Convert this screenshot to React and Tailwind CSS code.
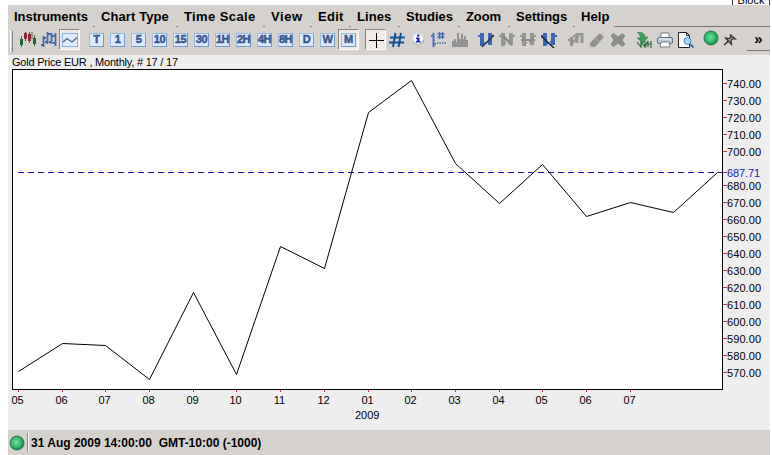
const MENUS = [
  { label: 'Instruments', width: 'w-[87px]', tracking: 'tracking-[-0.05px]' },
  { label: 'Chart Type', width: 'w-[83px]', tracking: 'tracking-[0.1px]' },
  { label: 'Time Scale', width: 'w-[87px]', tracking: 'tracking-[0.4px]' },
  { label: 'View', width: 'w-[47px]', tracking: 'tracking-[0.6px]' },
  { label: 'Edit', width: 'w-[39px]', tracking: 'tracking-[0.3px]' },
  { label: 'Lines', width: 'w-[49px]', tracking: 'tracking-[0.1px]' },
  { label: 'Studies', width: 'w-[60px]', tracking: 'tracking-[0px]' },
  { label: 'Zoom', width: 'w-[50px]', tracking: 'tracking-[-0.1px]' },
  { label: 'Settings', width: 'w-[65px]', tracking: 'tracking-[0px]' },
  { label: 'Help', width: 'w-[41px]', tracking: 'tracking-[0.1px]' },
]

const PERIODS = ['T', '1', '5', '10', '15', '30', '1H', '2H', '4H', '8H', 'D', 'W']

const POINTS = [
  [18, 371], [62, 343], [105, 345], [149, 379], [193, 292], [236, 374],
  [280, 246], [324, 268], [368, 112], [411, 80], [455, 163], [499, 203],
  [542, 164], [586, 216], [630, 202], [673, 212], [717, 172],
]

const MONTHS = ['05', '06', '07', '08', '09', '10', '11', '12', '01', '02', '03', '04', '05', '06', '07']
const PRICES = Array.from({ length: 18 }, (_, i) => 740 - i * 10).filter(p => p !== 690)

function Cell({ pressed = false, children }) {
  return (
    <div
      className={
        pressed
          ? 'flex h-[21px] w-[21px] shrink-0 items-center justify-center border border-t-[#85817b] border-l-[#85817b] border-r-white border-b-white bg-[#efe9e8]'
          : 'flex h-[21px] w-[21px] shrink-0 items-center justify-center'
      }
    >
      {children}
    </div>
  )
}

function Icon({ children }) {
  return (
    <svg viewBox="0 0 16 16" width="16" height="16" fill="none" className="shrink-0">
      {children}
    </svg>
  )
}

function Period({ label }) {
  return (
    <div className="flex h-[14px] w-[15px] shrink-0 items-center justify-center border border-[#9bb9e6] border-r-[#7598cf] border-b-[#7598cf] bg-[#dceafc] text-[11px] leading-none font-bold tracking-[-0.4px] text-[#38568e] [-webkit-text-stroke:0.5px_#38568e]">
      {label}
    </div>
  )
}

function CandlesIcon() {
  return (
    <Icon>
      <path d="M1.500 4v11M14.500 3v11" stroke="#2c6b38" />
      <path d="M0 7h3v6H0zM13 6h3v6h-3z" fill="#23652f" />
      <path d="M5.500 0v9M9.500 0v11M12 0v7" stroke="#8d3d45" />
      <path d="M4 1h3v6H4zM8 2h3v7H8z" fill="#8f2734" />
    </Icon>
  )
}

function BarsIcon() {
  return (
    <Icon>
      <path d="M2.500 4v11M0 13h3M3 6h2M6.500 0v12M4 10h2M7 2h3M10.500 1v11M8 10h2M11 4h3M14.500 1v13M12 11h2" stroke="#4268ad" strokeWidth="1.800" />
    </Icon>
  )
}

function LineIcon() {
  return (
    <Icon>
      <rect x=".5" y="1.500" width="15" height="13" fill="#e0edfd" stroke="#8eb1e5" />
      <path d="M1 10 5 6.500l5 3.500 5-4.500" stroke="#3f638f" strokeWidth="1.300" />
    </Icon>
  )
}

function HashIcon() {
  return (
    <Icon>
      <path d="M6.500 1 4 15M12 1 9.500 15M1 5.500h15M0 10.500h15" stroke="#10529b" strokeWidth="2" />
    </Icon>
  )
}

function InfoIcon() {
  return (
    <Icon>
      <path d="M8.500 3a5 4.500 0 0 1 1 9.500L8 15l-1-2.500A5 4.500 0 0 1 8.500 3Z" fill="#a3a2a4" />
      <path d="M8 1.500a5 5 0 0 1 1 10L8 13.500l-1-2a5 5 0 0 1 1-10Z" fill="#f5f5ff" stroke="#d0d0d6" strokeWidth=".5" />
      <path d="M7 2.500h2.500v2H7zM6 5.500h3.500v3.500h1v1.500H6V9h1V7H6z" fill="#2526cf" />
    </Icon>
  )
}

function GridStudyIcon() {
  return (
    <Icon>
      <path d="M2.500 1v14M0 4h2M3 12h2" stroke="#4b70bd" strokeWidth="2" />
      <path d="M8.500 0v7M11.500 0v7M6.500 2h7M6.500 5h7" stroke="#4267b5" strokeWidth="1.300" />
      <path d="M6 11h10" stroke="#4b70bd" strokeWidth="1.500" strokeDasharray="1.500 1" />
    </Icon>
  )
}

function VolumeIcon() {
  return (
    <Icon>
      <path d="M0 15V9h2V7h2v3h1V1h2v6h2V2h2v5h1V4h2v4h2v7z" fill="#929292" />
    </Icon>
  )
}

// Pair of price bars, optionally joined by a trend stroke
function TrendIcon({ color, stroke, line, weight = 1.5 }) {
  return (
    <Icon>
      <path d="M4 1v13M12 1v12" stroke={color} strokeWidth="4" />
      <path d="M0 4h4M4 11h3M9 10h3M12 4h4" stroke={color} strokeWidth="2" />
      <path d={line} stroke={stroke} strokeWidth={weight} />
    </Icon>
  )
}

function EditLineIcon() {
  return (
    <Icon>
      <path d="M3.500 5v9M9 2v9M14 1v10" stroke="#969696" strokeWidth="3" />
      <path d="M0 8h5M5 5l4-3h6M3 13l8-10" stroke="#929292" strokeWidth="2" />
    </Icon>
  )
}

function EraserIcon() {
  return (
    <Icon>
      <path d="m1 11 9-9q1-1 3 1l1 1q1 1 0 2l-8 9H3q-3-1-2-4Z" fill="#929292" />
      <path d="m7 6 4 4" stroke="#a8a8a8" />
    </Icon>
  )
}

function CrossIcon() {
  return (
    <Icon>
      <path d="M3.500 1 8 4.500 12.500 1 15.500 4 12.500 8l3 4-3 3L8 11.500 3.500 15 .5 12l3-4-3-4z" fill="#8c8c8c" />
    </Icon>
  )
}

function ImportIcon() {
  return (
    <Icon>
      <path d="M1 0q8 0 8 5h3l-5 6-6-5h3Q5 3 1 0Z" fill="#39a15c" stroke="#287b42" strokeWidth=".5" />
      <path d="m1 10 4 5v-5l4 5V9m0 6 3-6v6m0-3h3m0-3v7" stroke="#266a37" strokeWidth="1.200" />
    </Icon>
  )
}

function PrinterIcon() {
  return (
    <Icon>
      <path d="M4 6V1h8v5" fill="#fff" stroke="#737a83" />
      <rect x=".5" y="5.500" width="15" height="6" rx="1.500" fill="#b9cad8" stroke="#5e7282" />
      <path d="M2 7h12" stroke="#eef6fc" />
      <path d="M4 10h8l1 5H3z" fill="#fff" stroke="#777f87" />
    </Icon>
  )
}

function PreviewIcon() {
  return (
    <Icon>
      <path d="M.5.500h8l3 3v12H.5z" fill="#fff" stroke="#222" />
      <path d="M8.500.500v3h3" stroke="#222" />
      <circle cx="9.500" cy="9" r="3.500" fill="#a9d4f4" stroke="#4386c7" />
      <path d="m12 12 3.500 3.500" stroke="#2b70b3" strokeWidth="2" />
    </Icon>
  )
}

function PinIcon() {
  return (
    <Icon>
      <path d="M8 2.500 13.500 7H10.500L9 8.500l.5 4L3.500 6l4 .5L9 5z" fill="#a9a9a7" stroke="#333" strokeWidth="1.200" />
      <path d="m6.500 9-4.500 4" stroke="#222" strokeWidth="1.300" />
    </Icon>
  )
}

function GreenBall() {
  return (
    <Icon>
      <defs>
        <radialGradient id="ball" cx=".45" cy=".45" r=".55">
          <stop offset="0" stopColor="#7be0a4" />
          <stop offset=".6" stopColor="#35b96d" />
          <stop offset="1" stopColor="#128747" />
        </radialGradient>
      </defs>
      <circle cx="8" cy="8" r="7" fill="url(#ball)" stroke="#277b4b" />
    </Icon>
  )
}

function MenuBar() {
  return (
    <nav className="flex h-[22px] shrink-0 text-[13px] leading-[20px] font-bold">
      {MENUS.map(({ label, width, tracking }) => (
        <div key={label} className={`${width} flex shrink-0 items-end whitespace-nowrap`}>
          <span className={`${tracking} flex-1 pl-[6px]`}>{label}</span>
          <i className="h-px w-[2px] shrink-0 bg-[#85817b]" />
        </div>
      ))}
      <div className="flex-1 border-b border-[#77736e]" />
    </nav>
  )
}

function Toolbar() {
  return (
    <div className="flex h-[28px] shrink-0 items-start">
      <div className="mt-1 ml-[2px] h-[21px] w-[3px] border-r border-l border-r-[#85817b] border-l-white" />
      <div className="mt-[2px] ml-[4px] flex">
        <Cell><CandlesIcon /></Cell>
        <Cell><BarsIcon /></Cell>
        <Cell pressed><LineIcon /></Cell>
      </div>
      <div className="mt-[2px] ml-[6px] flex">
        {PERIODS.map(p => <Cell key={p}><Period label={p} /></Cell>)}
        <Cell pressed><Period label="M" /></Cell>
      </div>
      <div className="mt-[2px] ml-[6px] flex">
        <Cell pressed>
          <Icon><path d="M8 1v15M.5 8.500h15" stroke="#000" shapeRendering="crispEdges" /></Icon>
        </Cell>
        <Cell><HashIcon /></Cell>
        <Cell><InfoIcon /></Cell>
        <Cell><GridStudyIcon /></Cell>
        <Cell><VolumeIcon /></Cell>
      </div>
      <div className="mt-[2px] ml-[5px] flex">
        <Cell><TrendIcon color="#3a66b4" stroke="#25344a" line="M4 15 16 3" /></Cell>
        <Cell><TrendIcon color="#969696" stroke="#8c8c8c" line="m3 3 10 10" weight={2.5} /></Cell>
        <Cell><TrendIcon color="#969696" stroke="#8c8c8c" line="M1 8h14" weight={2} /></Cell>
        <Cell><TrendIcon color="#3a66b4" stroke="#17233a" line="m0 4 13 12" /></Cell>
      </div>
      <div className="mt-[2px] ml-[6px] flex">
        <Cell><EditLineIcon /></Cell>
        <Cell><EraserIcon /></Cell>
        <Cell><CrossIcon /></Cell>
      </div>
      <div className="mt-[2px] ml-[5px] flex">
        <Cell><ImportIcon /></Cell>
        <Cell><PrinterIcon /></Cell>
        <Cell><PreviewIcon /></Cell>
      </div>
      <div className="ml-[4px] flex">
        <Cell><GreenBall /></Cell>
        <div className="mt-[2px] -ml-[2px]"><Cell><PinIcon /></Cell></div>
      </div>
      <div className="ml-auto flex h-6 w-[23px] items-center justify-center border-b border-[#77736e] text-[15px] leading-none font-bold">
        <span>»</span>
      </div>
    </div>
  )
}

function Chart() {
  return (
    <svg viewBox="8 55 762 375" className="h-[375px] w-[762px] shrink-0 bg-[#eeeeee] text-[11px]">
      <text x="12" y="66" textLength="166">Gold Price EUR , Monthly, # 17 / 17</text>
      <rect x="12.500" y="69.500" width="710" height="320" fill="#fff" stroke="#000" />
      <path d="M18 172.500h700" stroke="#1818aa" strokeDasharray="6 4" />
      <path d="M718 172.500h4" stroke="#1818aa" />
      <polyline
        points={POINTS.map(p => p.join(',')).join(' ')}
        transform="translate(.5 .5)"
        fill="none"
        stroke="#000"
      />
      {PRICES.map(price => {
        const y = Math.round(83 + (740 - price) * 1.7)
        return (
          <g key={price}>
            <path d={`M723 ${y + 0.5}h4`} stroke="#c43142" />
            <text x="727" y={y + 5} textLength="34">{price}.00</text>
          </g>
        )
      })}
      <path d="M723 172.500h4" stroke="#c43142" />
      <text x="727" y="177" textLength="33" fill="#1b1bb5">687.71</text>
      {MONTHS.map((month, i) => (
        <g key={i}>
          <path d={`M${POINTS[i][0] + 0.5} 390v2`} stroke="#c43142" />
          <text x={POINTS[i][0] - 0.5} y="404" textAnchor="middle">{month}</text>
        </g>
      ))}
      <text x="355" y="419">2009</text>
    </svg>
  )
}

export default function App() {
  return (
    <div className="flex h-[455px] w-[772px] flex-col overflow-hidden bg-white pl-2 font-['Liberation_Sans',Arial,sans-serif] text-black">
      <div className="flex h-[5px] shrink-0 justify-end pr-[2px]">
        <div className="flex h-[5px] w-[38px] items-end justify-center border-r border-l border-[#333] text-[11px] leading-[9px]">
          Block
        </div>
      </div>
      <div className="flex h-[50px] w-[762px] shrink-0 flex-col bg-[#d5d2cd]">
        <MenuBar />
        <Toolbar />
      </div>
      <Chart />
      <footer className="flex h-[25px] w-[762px] shrink-0 items-center bg-[#d5d2cd] pl-px text-[12px] font-bold">
        <GreenBall />
        <div className="ml-[2px] h-[19px] w-[2px] border-r border-l border-r-white border-l-[#85817b]" />
        <span className="ml-[2px] whitespace-pre">31 Aug 2009 14:00:00  GMT-10:00 (-1000)</span>
      </footer>
    </div>
  )
}
